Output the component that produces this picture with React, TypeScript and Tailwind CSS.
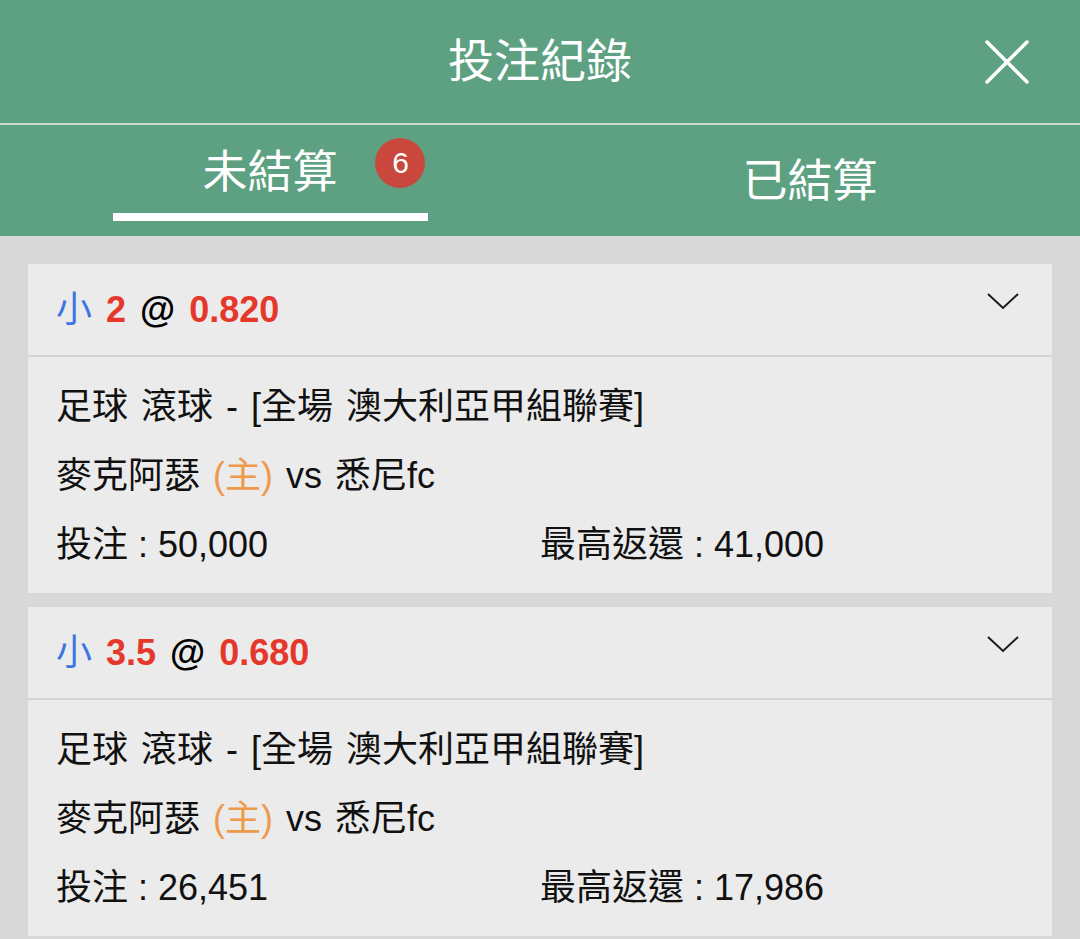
const font = { fontFamily: '"Liberation Sans", "Noto Sans CJK TC", sans-serif' };

type Bet = {
  line: string;
  odds: string;
  stake: string;
  maxReturn: string;
};

const bets: Bet[] = [
  { line: "2", odds: "0.820", stake: "50,000", maxReturn: "41,000" },
  { line: "3.5", odds: "0.680", stake: "26,451", maxReturn: "17,986" },
];

function BetCard({ bet }: { bet: Bet }) {
  return (
    <div className="bg-[#ebebeb]">
      <div className="flex h-[91px] items-center justify-between pl-[28px] pr-[33px] text-[36px]">
        <div className="flex items-center gap-[14px]">
          <span className="text-[#3b74e4]">小</span>
          <span className="font-bold text-[#e5372a]">{bet.line}</span>
          <span className="font-bold text-black">@</span>
          <span className="font-bold text-[#e5372a]">{bet.odds}</span>
        </div>
        <svg width="32" height="18" viewBox="0 0 32 18" className="mb-[18px]">
          <polyline points="1,2 16,16 31,2" fill="none" stroke="#1a1a1a" strokeWidth="2" />
        </svg>
      </div>
      <div className="h-[2px] bg-[#d3d3d3]" />
      <div className="px-[28px] pt-[15px] pb-[14px] text-[36px] leading-[69px] text-[#111] [word-spacing:3px]">
        <div>足球 滾球 - [全場 澳大利亞甲組聯賽]</div>
        <div>
          麥克阿瑟 <span className="text-[#ee9a4b]">(主)</span> vs 悉尼fc
        </div>
        <div className="grid grid-cols-2 [word-spacing:0px]">
          <div>投注 : {bet.stake}</div>
          <div>最高返還 : {bet.maxReturn}</div>
        </div>
      </div>
    </div>
  );
}

export default function App() {
  return (
    <div className="min-h-[939px] w-[1080px] bg-[#d8d8d8]" style={font}>
      <div className="grid h-[123px] grid-cols-[1fr_auto_1fr] items-center bg-[#5da182] text-white">
        <div />
        <div className="text-[46px]">投注紀錄</div>
        <div className="flex justify-end pr-[50px]">
          <svg width="46" height="46" viewBox="0 0 46 46">
            <path d="M3 3 L43 43 M43 3 L3 43" stroke="white" strokeWidth="3.5" strokeLinecap="round" />
          </svg>
        </div>
      </div>
      <div className="h-[2px] bg-[#c9d9cf]" />
      <div className="flex h-[111px] bg-[#5da182] text-white">
        <div className="flex w-1/2 flex-col items-center pt-[22px]">
          <div className="relative text-[45px] leading-[52px]">
            未結算
            <span className="absolute left-[173px] top-[-9px] flex h-[50px] w-[50px] items-center justify-center rounded-full bg-[#c9473d] text-[30px]">
              6
            </span>
          </div>
          <div className="mt-[14px] h-[8px] w-[315px] bg-white" />
        </div>
        <div className="flex w-1/2 items-center justify-center pt-[3px]">
          <div className="text-[45px] leading-[52px]">已結算</div>
        </div>
      </div>
      <div className="flex flex-col gap-[14px] px-[28px] pt-[28px]">
        {bets.map((b) => (
          <BetCard key={b.line} bet={b} />
        ))}
      </div>
    </div>
  );
}
